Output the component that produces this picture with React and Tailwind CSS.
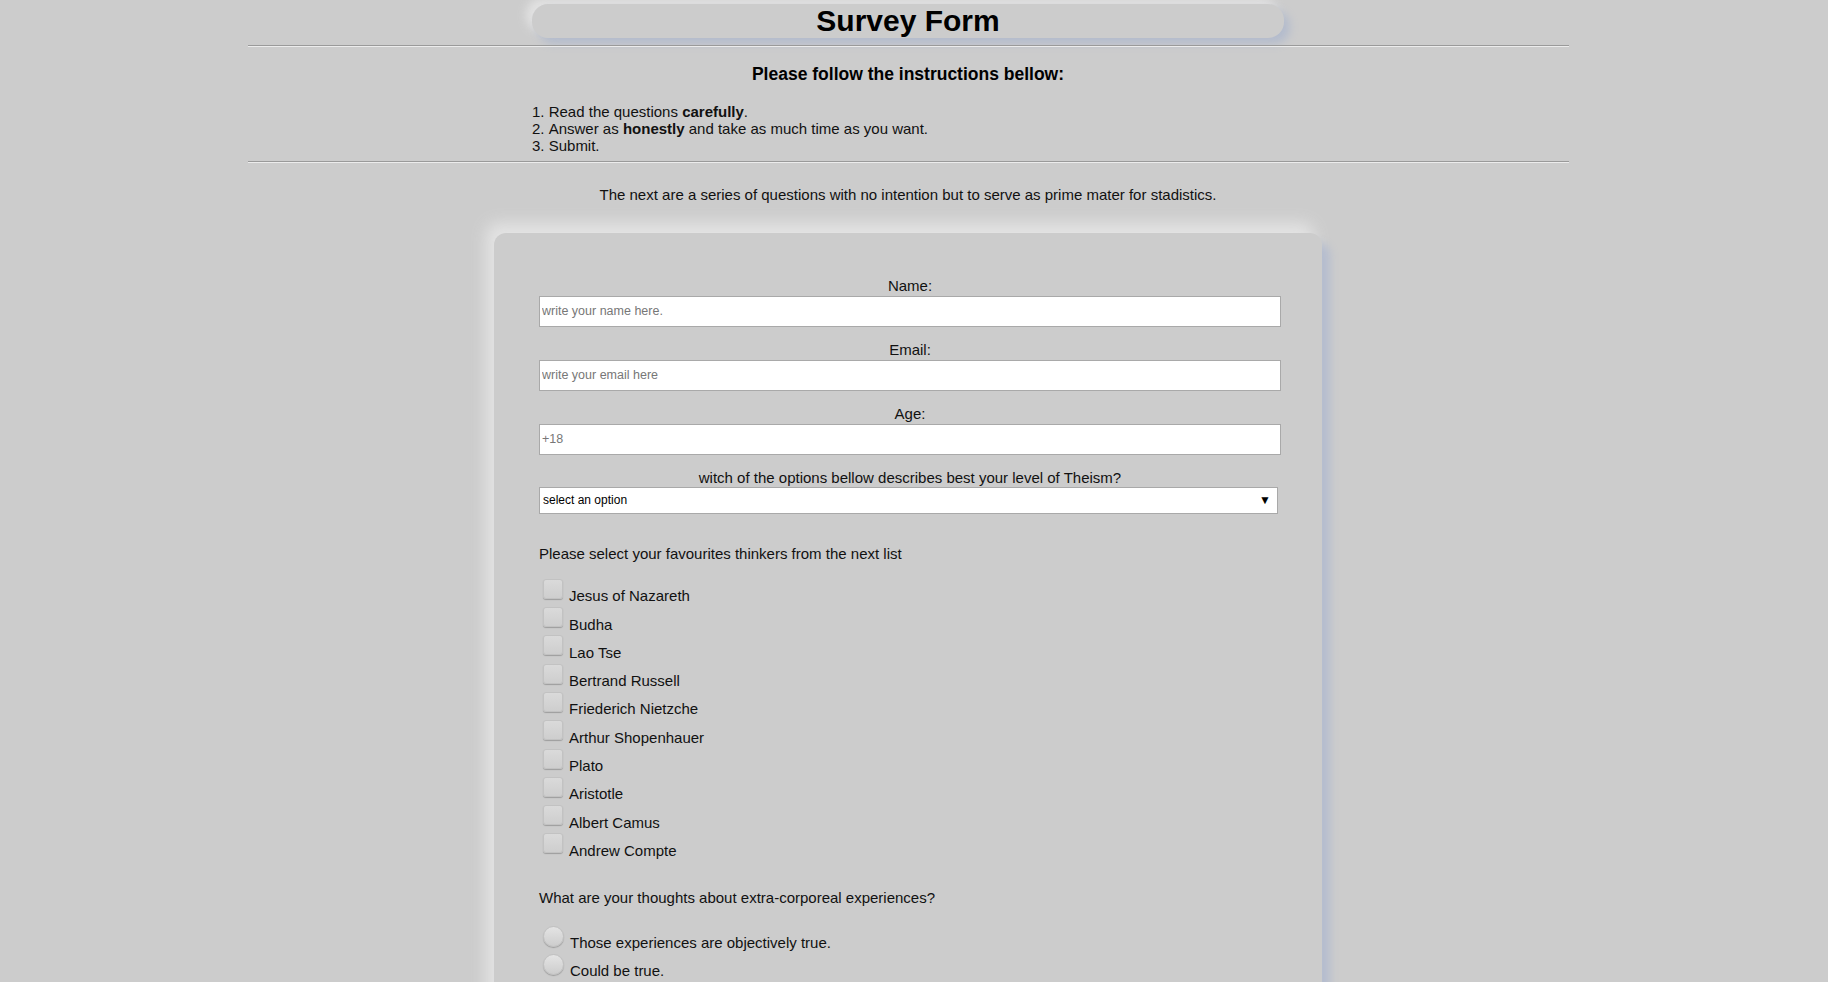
const thinkers = [
  "Jesus of Nazareth",
  "Budha",
  "Lao Tse",
  "Bertrand Russell",
  "Friederich Nietzche",
  "Arthur Shopenhauer",
  "Plato",
  "Aristotle",
  "Albert Camus",
  "Andrew Compte",
];

const fields = [
  { label: "Name:", placeholder: "write your name here.", type: "text" },
  { label: "Email:", placeholder: "write your email here", type: "email" },
  { label: "Age:", placeholder: "+18", type: "number" },
];

function Field({ label, placeholder, type }) {
  return (
    <div className="mb-[14px]">
      <label className="block w-[742px] text-center text-[15px] leading-[17px] mb-[2px]">
        {label}
      </label>
      <input
        type={type}
        placeholder={placeholder}
        className="block w-[742px] h-[31px] bg-white border border-[#a9a9a9] pl-[2px] text-[12.5px] placeholder:text-[#777] outline-none [appearance:textfield]"
      />
    </div>
  );
}

export default function App() {
  return (
    <div
      className="min-h-screen bg-[#cccccc] text-[#111]"
      style={{ fontFamily: '"Liberation Sans", Arial, sans-serif' }}
    >
      <div className="w-[1816px] pt-[4px] pb-10 flex flex-col items-center">
        <header className="w-[752px] h-[34px] rounded-[16px] bg-[#cccccc] flex items-center justify-center shadow-[6px_6px_8px_#b4bccd,-6px_-6px_10px_#e2e2e2]">
          <h1 className="text-[30px] leading-[34px] font-bold text-black">Survey Form</h1>
        </header>

        <hr className="w-[1321px] mt-[7px] border-0 border-t border-t-[#9a9a9a] border-b border-b-[#ececec]" />

        <h3 className="mt-[17px] text-[17.5px] leading-[20px] font-bold text-black">
          Please follow the instructions bellow:
        </h3>

        <ol className="w-[752px] mt-[20px] list-decimal list-inside text-[15px] leading-[16.9px]">
          <li>
            Read the questions <b>carefully</b>.
          </li>
          <li>
            Answer as <b>honestly</b> and take as much time as you want.
          </li>
          <li>Submit.</li>
        </ol>

        <hr className="w-[1321px] mt-[6px] border-0 border-t border-t-[#9a9a9a] border-b border-b-[#ececec]" />

        <p className="mt-[23px] text-[15px] leading-[17px]">
          The next are a series of questions with no intention but to serve as prime mater for stadistics.
        </p>

        <form className="mt-[30px] w-[828px] rounded-[12px] bg-[#cccccc] pt-[44px] pl-[45px] pb-10 shadow-[8px_10px_8px_#b5bdcf,-8px_-10px_16px_#e4e4e4]">
          {fields.map((f) => (
            <Field key={f.label} {...f} />
          ))}

          <label className="block w-[742px] text-center text-[15px] leading-[17px] mb-[1px]">
            witch of the options bellow describes best your level of Theism?
          </label>
          <div className="relative w-[739px] h-[27px]">
            <select className="appearance-none w-full h-full bg-white border border-[#a9a9a9] pl-[3px] text-[12px] text-black outline-none">
              <option>select an option</option>
              <option>Theist</option>
              <option>Agnostic</option>
              <option>Atheist</option>
            </select>
            <span className="pointer-events-none absolute right-[7px] top-[5px] text-[12px] leading-[16px] text-black">
              ▼
            </span>
          </div>

          <p className="mt-[31px] text-[15px] leading-[17px]">
            Please select your favourites thinkers from the next list
          </p>

          <div className="mt-[17px]">
            {thinkers.map((t) => (
              <label key={t} className="flex h-[28.3px]">
                <input
                  type="checkbox"
                  className="appearance-none ml-[4px] w-[20px] h-[20px] rounded-[3px] bg-linear-to-b from-[#dadada] to-[#cecece] border border-[#c2c2c2] shadow-[0_1px_1px_#9d9d9d]"
                />
                <span className="ml-[6px] mt-[8.5px] text-[15px] leading-[17px]">{t}</span>
              </label>
            ))}
          </div>

          <p className="mt-[27px] text-[15px] leading-[17px]">
            What are your thoughts about extra-corporeal experiences?
          </p>

          <div className="mt-[20px]">
            {["Those experiences are objectively true.", "Could be true."].map((r) => (
              <label key={r} className="flex h-[28px]">
                <input
                  type="radio"
                  name="oobe"
                  className="appearance-none ml-[4px] w-[21px] h-[21px] rounded-full bg-linear-to-b from-[#e4e4e4] to-[#cdcdcd] border border-[#c0c0c0] shadow-[0_1px_1px_#9d9d9d]"
                />
                <span className="ml-[6px] mt-[8px] text-[15px] leading-[17px]">{r}</span>
              </label>
            ))}
          </div>
        </form>
      </div>
    </div>
  );
}
